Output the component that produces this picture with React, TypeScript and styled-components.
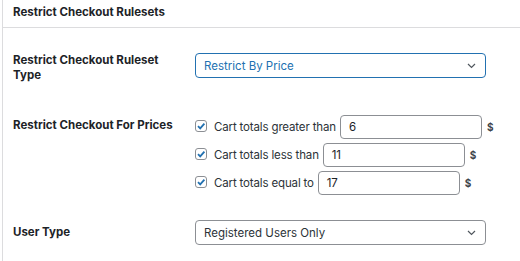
import styled, { createGlobalStyle } from 'styled-components'

const GlobalStyle = createGlobalStyle`
  html, body {
    margin: 0;
    padding: 0;
    background: #ffffff;
  }
  body {
    font-family: Inter, "Noto Sans", "Liberation Sans", sans-serif;
    color: #1d2327;
    -webkit-font-smoothing: antialiased;
  }
`

const Panel = styled.div`
  margin-left: 2px;
  width: 518px;
  height: 261px;
  border-left: 1px solid #dcdcde;
  box-sizing: border-box;
`

const Header = styled.h2`
  margin: 0;
  padding: 0 10px 4px;
  display: flex;
  align-items: center;
  font-size: 11.5px;
  font-weight: 700;
  border-bottom: 1px solid #dcdcde;
  box-sizing: border-box;
  height: 28px;
`

const Row = styled.div<{ $top: number }>`
  display: grid;
  grid-template-columns: 182px 291px;
  padding: ${(p) => p.$top}px 0 0 10px;
`

const Label = styled.div<{ $offset?: number }>`
  font-size: 11.5px;
  font-weight: 700;
  line-height: 15px;
  padding-top: ${(p) => p.$offset || 0}px;
`

const SelectBox = styled.div<{ $active?: boolean }>`
  height: 25px;
  box-sizing: border-box;
  display: flex;
  align-items: center;
  justify-content: space-between;
  padding: 0 9px 0 8px;
  border: ${(p) => (p.$active ? '1.5px solid #2271b1' : '1px solid #8c8f94')};
  border-radius: 4px;
  font-size: 11.5px;
  color: ${(p) => (p.$active ? '#2271b1' : '#2c3338')};
`

const Chevron = () => (
  <svg width="9" height="6" viewBox="0 0 9 6">
    <path d="M1 1 L4.5 4.5 L8 1" fill="none" stroke="#50575e" strokeWidth="1.2" />
  </svg>
)

const Checks = styled.div`
  display: flex;
  flex-direction: column;
  gap: 4px;
`

const CheckRow = styled.div`
  display: flex;
  align-items: center;
  height: 24px;
  font-size: 11.5px;
  letter-spacing: -0.15px;
  white-space: nowrap;
  color: #2c3338;
`

const Box = styled.span`
  flex-shrink: 0;
  width: 12px;
  height: 12px;
  box-sizing: border-box;
  border: 1px solid #8c8f94;
  border-radius: 3px;
  display: inline-flex;
  align-items: center;
  justify-content: center;
  margin-right: 7px;
  margin-top: -3px;
`

const Amount = styled.div`
  flex-shrink: 0;
  width: 142px;
  height: 24px;
  box-sizing: border-box;
  border: 1px solid #8c8f94;
  border-radius: 4px;
  margin-left: 4px;
  padding-left: 8px;
  display: flex;
  align-items: center;
  font-size: 11.5px;
  color: #1d2327;
`

const Dollar = styled.span`
  margin-left: 5px;
  font-size: 10px;
  font-weight: 700;
  color: #3c434a;
`

const Tick = () => (
  <svg width="10" height="10" viewBox="0 0 10 10">
    <path d="M2 5.2 L4.2 7.4 L8.4 2.6" fill="none" stroke="#2271b1" strokeWidth="1.8" />
  </svg>
)

const prices = [
  { text: 'Cart totals greater than', value: '6' },
  { text: 'Cart totals less than', value: '11' },
  { text: 'Cart totals equal to', value: '17' },
]

const App: React.FC = () => {
  return (
    <>
      <GlobalStyle />
      <Panel>
        <Header>Restrict Checkout Rulesets</Header>
        <Row $top={25}>
          <Label>
            Restrict Checkout Ruleset
            <br />
            Type
          </Label>
          <SelectBox $active>
            Restrict By Price
            <Chevron />
          </SelectBox>
        </Row>
        <Row $top={32}>
          <Label $offset={3}>Restrict Checkout For Prices</Label>
          <Checks>
            {prices.map((p, index) => (
              <CheckRow key={`${index}+price`}>
                <Box>
                  <Tick />
                </Box>
                {p.text}
                <Amount>{p.value}</Amount>
                <Dollar>$</Dollar>
              </CheckRow>
            ))}
          </Checks>
        </Row>
        <Row $top={25}>
          <Label $offset={5}>User Type</Label>
          <SelectBox>
            Registered Users Only
            <Chevron />
          </SelectBox>
        </Row>
      </Panel>
    </>
  )
}

export default App
